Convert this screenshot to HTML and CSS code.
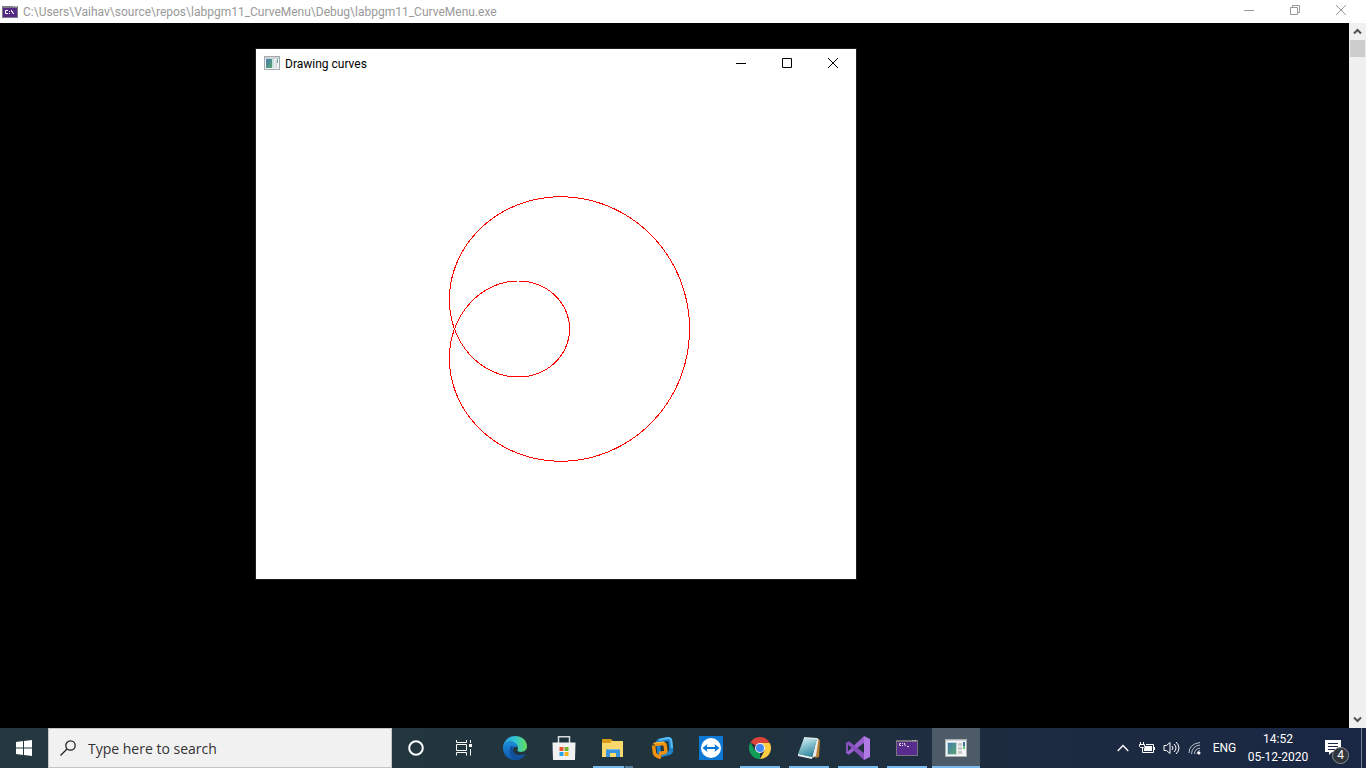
FILE: index.html
```html
<!DOCTYPE html>
<html lang="en">
<head>
<meta charset="utf-8">
<title>Drawing curves</title>
<link rel="stylesheet" href="styles.css">
</head>
<body>
<main class="console">
  <header class="titlebar console-bar">
    <svg class="console-icon" width="16" height="12" viewBox="0 0 16 12"><path fill="#7c7c86" d="M0 0h16v12H0z"/><path fill="#552a85" d="M1 2h14v9H1z"/><path fill="#c8c8d0" d="M11 0h1v1h-1zM13 0h2v1h-2z"/><path fill="none" stroke="#fff" d="M6 4.500H3.500V7.500H6M7 5.500h1M7 7.500h1M9.500 4v1.500h1V7h1v1"/></svg>
    <h1 class="caption muted">C:\Users\Vaihav\source\repos\labpgm11_CurveMenu\Debug\labpgm11_CurveMenu.exe</h1>
    <div class="controls muted">
      <button class="control" aria-label="Minimize"><svg width="12" height="12"><path d="M1 6.500h10"/></svg></button>
      <button class="control" aria-label="Restore"><svg width="12" height="12"><path d="M1.500 3.500h7v7h-7zM3.500 3V1.500h7v7H9"/></svg></button>
      <button class="control" aria-label="Close"><svg width="12" height="12"><path d="M1 1l10 10M11 1L1 11"/></svg></button>
    </div>
  </header>
  <div class="console-body">
    <div class="console-screen"></div>
    <div class="scrollbar">
      <button class="scroll-button" aria-label="Scroll up"><svg width="9" height="7"><path d="M1 5.500l3.500-3.500L8 5.500"/></svg></button>
      <div class="thumb"></div>
      <button class="scroll-button scroll-down" aria-label="Scroll down"><svg width="9" height="7"><path d="M1 1.500L4.500 5 8 1.500"/></svg></button>
    </div>
  </div>
  <section class="window" aria-label="Drawing curves">
    <header class="titlebar window-bar">
      <svg class="window-icon" width="16" height="14" viewBox="0 0 16 14"><path fill="#a4abb0" d="M0 0h16v14H0z"/><path fill="#f3f4f4" d="M1 1h14v12H1z"/><path fill="#cfd3d6" d="M1 1h14v2H1z"/><path fill="url(#screen)" d="M2 3h6v9H2z"/><path fill="#c5e2e2" d="M8 3h2v9H8z"/><path fill="#d9dcdc" d="M11 4h2v8h-2z"/><path fill="#62aaa0" d="M13 3h1v4h-1z"/></svg>
      <h2 class="caption">Drawing curves</h2>
      <div class="controls">
        <button class="control" aria-label="Minimize"><svg width="12" height="12"><path d="M1 6.500h10"/></svg></button>
        <button class="control" aria-label="Maximize"><svg width="12" height="12"><path d="M1.500 1.500h9v9h-9z"/></svg></button>
        <button class="control" aria-label="Close"><svg width="12" height="12"><path d="M1 1l10 10M11 1L1 11"/></svg></button>
      </div>
    </header>
    <svg class="plot" width="600" height="500" viewBox="0 0 600 500" role="img" aria-label="Limaçon curve"><path id="curve" class="curve"/></svg>
  </section>
</main>
<footer class="taskbar">
  <button class="start" aria-label="Start"><svg width="16" height="16" viewBox="0 0 16 16"><path fill="#fff" d="M0 2l7-1v6.500H0zM8 1l8-1v7.500H8zM0 8.500h7V15l-7-1zM8 8.500h8V16l-8-1z"/></svg></button>
  <label class="search">
    <svg width="16" height="16" viewBox="0 0 16 16" fill="none" stroke="#222" stroke-width="1.300"><circle cx="10.500" cy="5.500" r="4.700"/><path d="M7 9L.5 15.500"/></svg>
    <input class="search-input" type="text" placeholder="Type here to search" aria-label="Type here to search">
  </label>
  <nav class="apps">
    <button class="app cortana" aria-label="Cortana"><svg width="16" height="16"><circle cx="8" cy="8" r="6.800" fill="none" stroke="#fff" stroke-width="2"/></svg></button>
    <button class="app task-view" aria-label="Task View"><svg width="18" height="16" fill="none" stroke="#fff"><path d="M1.500 0v2.500h10V0M1.500 4.500h10v6h-10zM1.500 15.500v-3h10v3M15.500 0v3M15.500 9v6.500"/><path fill="#fff" stroke="none" d="M14 4h3v3h-3z"/></svg></button>
    <button class="app" aria-label="Microsoft Edge"><svg width="24" height="24" viewBox="0 0 24 24">
      <defs><linearGradient id="edge-top"><stop offset="0" stop-color="#2598e0"/><stop offset=".5" stop-color="#32c4d8"/><stop offset="1" stop-color="#63df58"/></linearGradient><linearGradient id="edge-low" x2="0" y2="1"><stop offset="0" stop-color="#1b8ddd"/><stop offset="1" stop-color="#0f55a9"/></linearGradient></defs>
      <path fill="url(#edge-low)" d="M0 12C0 7 4 5 8 5.500c4 .5 7 3 7 6-3-2-6 1-5 4 1.500 4 7 5 12 2.500C20 22 16 24 12 24 5 24 0 19 0 12z"/>
      <path fill="#12509c" d="M8 10c-3 5-1 12 5 14 4 0 7-2 9-5.500-5 2-11 1-12.300-3.500C9 13 10 12 11 11c-1-1-2-1-3-1z"/>
      <path fill="url(#edge-top)" d="M0 11.500C.7 5 5.500 0 12 0c7 0 12 4.500 12 10.500 0 5-6 6.500-9 4.700-1.300-.8.300-1.400 0-3.700C14.500 8 11 5.500 7.500 5.500 4 5.500 1 7.500 0 11.500z"/></svg></button>
    <button class="app" aria-label="Microsoft Store"><svg width="24" height="24" viewBox="0 0 24 24"><path d="M6.500 8V.8h11V8" fill="none" stroke="#d9dcde" stroke-width="1.500"/><path fill="#f1f1f1" d="M.5 6.500h23L23 24H1z"/><path fill="#e8502a" d="M7.500 11h4v4h-4z"/><path fill="#72b329" d="M12.500 11h4v4h-4z"/><path fill="#25a3ea" d="M7.500 16h4v4h-4z"/><path fill="#f7b51c" d="M12.500 16h4v4h-4z"/></svg></button>
    <button class="app running grouped" aria-label="File Explorer"><svg width="24" height="20" viewBox="0 0 24 20"><path fill="#d99b16" d="M1 1h9l2 2h10v5H1z"/><path fill="#fbd86c" d="M1 5h8l2-2h11v16H1z"/><path fill="#3a94dc" d="M5 19v-6q0-2 2-2h10q2 0 2 2v6h-4v-4H9v4z"/><path fill="#78bced" d="M7 11h10v1H7z"/></svg></button>
    <button class="app" aria-label="VMware Workstation"><svg width="24" height="24" viewBox="0 0 24 24" fill="none" stroke-linejoin="round"><path stroke="#1e83cc" stroke-width="4" d="M10 4.500L18 3q2 0 2.300 2l1 9q0 2-2 3l-8 2q-2 0-2-2L8 7q0-2 2-2.500z"/><path stroke="#5bbcf4" stroke-width="2" d="M9 4L18 2q3 0 3.300 3l.7 7"/><path stroke="#f0920f" stroke-width="3.500" d="M4.500 8.500L13 7.500q2 0 2.200 2l.6 5q0 2-2 2.300L9 17.500M3.500 9.500L4.500 17q.5 2 2.500 3l4 1.500"/><path stroke="#ffc54a" d="M3 8.500Q3.500 7 5 7l9-1"/></svg></button>
    <button class="app" aria-label="TeamViewer"><svg width="24" height="24" viewBox="0 0 24 24"><path fill="#0d79d5" d="M0 0h24v24H0z"/><circle cx="12" cy="12" r="10" fill="#fff"/><path fill="#0876d2" d="M3.500 12l5-4-.7 3h8.400l-.7-3 5 4-5 4 .7-3H7.800l.7 3z"/></svg></button>
    <button class="app running" aria-label="Google Chrome"><svg width="22" height="22" viewBox="0 0 24 24"><path fill="#db4437" d="M12 12L1.600 6A12 12 0 0 1 22.400 6z"/><path fill="#0f9d58" d="M12 12L12 24A12 12 0 0 1 1.600 6L6.800 15z"/><path fill="#ffcd40" d="M12 6.500h10.700A12 12 0 0 1 12 24l5-9z"/><circle cx="12" cy="12" r="5.500" fill="#f4f4f4"/><circle cx="12" cy="12" r="4.400" fill="#4285f4"/></svg></button>
    <button class="app running" aria-label="Notepad"><svg width="24" height="24" viewBox="0 0 24 24"><defs><linearGradient id="note" x1=".3" y1="0" x2=".7" y2="1"><stop offset="0" stop-color="#d4eef2"/><stop offset=".45" stop-color="#7fbccb"/><stop offset="1" stop-color="#2b8298"/></linearGradient></defs><path fill="#b98032" d="M20 3l3 1-1 17-4 1z"/><path fill="#e8eded" d="M20 2l1.500 1L19 20l-4 2z"/><path fill="url(#note)" d="M7 2l13 1-5 18-14-3z"/><path fill="#e6f3f4" d="M1 18l14 3v2L1 20z"/><path stroke="#dce7e8" stroke-width="1.500" d="M7 1.700l13 1"/></svg></button>
    <button class="app running" aria-label="Visual Studio"><svg width="24" height="24" viewBox="0 0 24 24"><path fill="#8650bd" d="M0 7l3-1.500L18 17V7L3 18.500 0 17zm2.500 2v6L6 12z"/><path fill="#9960d0" d="M18 0v7L3 18.500 0 17 18 0z"/><path fill="#8650bd" d="M3 5.500L18 17v7L0 7z"/><path fill="#20303f" d="M2 9l3.500 3L2 15zM11.500 12L18 7v10z"/><path fill="#b27ae5" d="M18 0l6 3v18l-6 3z"/></svg></button>
    <button class="app running" aria-label="Console"><svg width="22" height="18" viewBox="0 0 22 18"><path fill="#777580" d="M0 1h22v16H0z"/><path fill="#582b8e" d="M1 3h20v13H1z"/><path fill="#bbb" d="M16 1h1v1h-1zM18 1h2v1h-2z"/><path fill="none" stroke="#ddd" d="M5 4.500H3.500v2H5M6 4.500h1M6 6.500h1M8.500 4v1l1 2M11 7.500h2"/></svg></button>
    <button class="app running active" aria-label="Drawing curves"><svg width="22" height="18" viewBox="0 0 22 18"><defs><linearGradient id="screen" x2="1" y2="1"><stop offset="0" stop-color="#457bb0"/><stop offset="1" stop-color="#59a66c"/></linearGradient></defs><path fill="#a8adb0" d="M0 0h22v18H0z"/><path fill="#f6f6f6" d="M1 1h20v16H1z"/><path fill="#d1d4d6" d="M1 1h20v1H1z"/><path fill="#bfd4dc" d="M2 3h10v13H2z"/><path fill="url(#screen)" d="M3 4h8v11H3z"/><path fill="#cacaca" d="M13 4h4v3h-4zM13 8h4v3h-4zM13 12h4v3h-4z"/><path fill="#3d6f9c" d="M18 3h2v4h-2z"/><path fill="#6cc67b" d="M18 7h2v3h-2z"/></svg></button>
  </nav>
  <div class="tray">
    <button class="tray-button" aria-label="Show hidden icons"><svg width="12" height="8"><path stroke-width="1.300" d="M.7 7L6 1.500 11.300 7"/></svg></button>
    <button class="tray-button" aria-label="Battery"><svg width="16" height="14"><path d="M1.500 1v2M4.500 1v2M.5 3.500h5v2l-1 1h-3l-1-1zM3.500 7v4.500h11v-8H7"/><path fill="#fff" stroke="none" d="M6 5h7v5H5V8zM15 6h1v3h-1z"/></svg></button>
    <button class="tray-button" aria-label="Volume"><svg width="17" height="14"><path d="M1 4.500h2.500L7 1.500v11L3.500 9.500H1zM9 5q2 2 0 4M11 3q4 4 0 8M13 1q6 6 0 12"/></svg></button>
    <button class="tray-button" aria-label="Network"><svg width="14" height="14"><path stroke="#b9c1cb" d="M1 12Q1 3 12 1.500M3.500 13Q4 5 12 4M6.500 13q0-5 5.500-6M9 13q0-3 3-3.500"/><circle cx="11" cy="12" r="1.500" fill="#fff" stroke="none"/></svg></button>
    <button class="language">ENG</button>
    <button class="clock"><time>14:52</time><time>05-12-2020</time></button>
    <button class="notifications" aria-label="Notifications, 4"><svg width="16" height="16"><path fill="#fff" stroke="none" d="M0 0h16v12H7l-3 3v-3H0z"/><path stroke="#1d2945" d="M3 3.500h10M3 6.500h10M3 9.500h7"/></svg><span class="badge">4</span></button>
    <button class="desktop" aria-label="Show desktop"></button>
  </div>
</footer>
<script src="curve.js"></script>
</body>
</html>
```
FILE: curve.js
```js
// Limaçon r = a cos(t) + b around the given origin.
const a = 175, b = 60, originX = 198.5, originY = 250;
const points = [];
for (let i = 0; i < 720; i++) {
  const t = i * Math.PI / 360;
  const r = a * Math.cos(t) + b;
  points.push(`${(originX + r * Math.cos(t)).toFixed(2)} ${(originY - r * Math.sin(t)).toFixed(2)}`);
}
document.getElementById("curve").setAttribute("d", `M${points.join("L")}Z`);
```
FILE: styles.css
```css
* { box-sizing: border-box; }
body {
  margin: 0;
  height: 100vh;
  display: flex;
  flex-direction: column;
  overflow: hidden;
  background: #000;
  font-family: Roboto, "Noto Sans", sans-serif;
  font-size: 12px;
}
button {
  border: 0;
  padding: 0;
  background: none;
  color: inherit;
  font: inherit;
  display: flex;
  align-items: center;
  justify-content: center;
}
svg { display: block; flex: none; }

.console { position: relative; flex: 1; min-height: 0; display: flex; flex-direction: column; }
.titlebar { display: flex; align-items: center; background: #fff; color: #000; }
.console-bar { height: 23px; padding: 0 2px; gap: 5px; }
.caption { margin: 0; flex: 1; font-size: 12px; font-weight: 400; line-height: 16px; white-space: nowrap; }
.muted { color: #999; }
.controls { display: flex; align-self: stretch; }
.console-bar .controls { height: 20px; }
.control { width: 46px; }
.control svg { fill: none; stroke: currentColor; }
.console-body { flex: 1; min-height: 0; display: flex; }
.console-screen { flex: 1; background: #000; }
.scrollbar { width: 17px; background: #f0f0f0; display: flex; flex-direction: column; }
.scroll-button { height: 17px; }
.scroll-button svg { fill: none; stroke: #505050; stroke-width: 2; }
.scroll-down { margin-top: auto; }
.thumb { height: 17px; margin: 0 1px; background: #cdcdcd; }

.window { position: absolute; left: 256px; top: 49px; width: 600px; background: #fff; outline: 1px solid #1c1c1c; }
.window-bar { height: 30px; padding-left: 8px; gap: 5px; }
.window-icon { margin-bottom: 2px; }
.window-bar .controls { padding-bottom: 2px; }
.plot { width: 100%; height: auto; }
.curve { fill: none; stroke: #f00; stroke-width: 1; shape-rendering: crispEdges; }

.taskbar { height: 40px; display: flex; background: linear-gradient(90deg, #23393f, #21343e 50%, #1d2b40 75%, #1a2744); color: #fff; }
.start { width: 48px; }
.search { width: 344px; display: flex; align-items: center; gap: 12px; padding: 0 11px; background: #f1f1f1; border: 1px solid #c3c5c6; }
.search-input { flex: 1; min-width: 0; border: 0; padding: 0; background: none; font-family: "Open Sans", "Noto Sans", sans-serif; font-size: 14px; color: #333; outline: 0; }
.search-input::placeholder { color: #333; opacity: 1; }
.apps { display: flex; gap: 1px; padding-left: 1px; }
.app { width: 48px; position: relative; }
.cortana { padding-right: 2px; }
.task-view { padding-right: 4px; }
.running::after { content: ""; position: absolute; left: 4px; right: 4px; bottom: 0; height: 2px; background: #76b9ed; }
.grouped::after { background: linear-gradient(90deg, #76b9ed 31px, #2c4250 31px, #2c4250 32px, #527fa2 32px); }
.active { background: #4d5a67; }
.active::after { left: 0; right: 0; }
.tray { margin-left: auto; display: flex; }
.tray-button { width: 24px; }
.tray-button svg { fill: none; stroke: #fff; }
.language { width: 39px; padding-right: 4px; }
.clock { width: 64px; flex-direction: column; line-height: 18px; }
.notifications { width: 51px; padding-right: 5px; position: relative; }
.badge { position: absolute; left: 22px; top: 19px; width: 17px; height: 17px; border: 1px solid #8b9097; border-radius: 50%; background: #30343b; line-height: 15px; }
.desktop { width: 5px; border-left: 1px solid #75808f; }
```
